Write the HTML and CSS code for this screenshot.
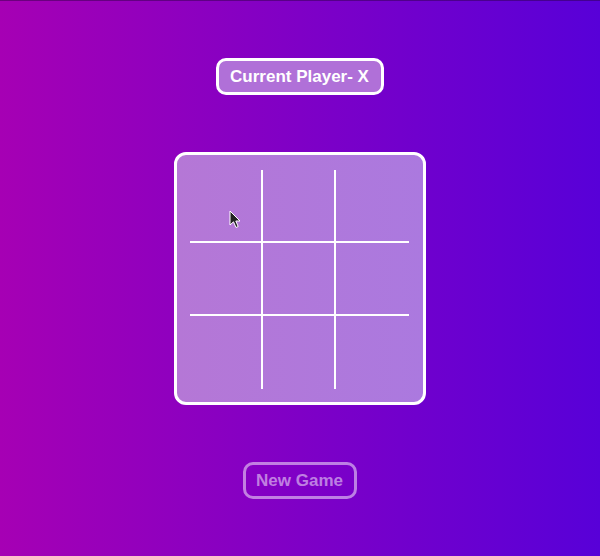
FILE: index.html
```html
<!DOCTYPE html>
<html lang="en">
<head>
<meta charset="utf-8">
<title>Tic Tac Toe</title>
<link rel="stylesheet" href="styles.css">
</head>
<body>
<main class="app">
  <div class="status">Current Player- X</div>
  <div class="board">
    <div class="grid">
      <div class="cell c-r c-b"></div>
      <div class="cell c-r c-b"></div>
      <div class="cell c-b"></div>
      <div class="cell c-r c-b"></div>
      <div class="cell c-r c-b"></div>
      <div class="cell c-b"></div>
      <div class="cell c-r"></div>
      <div class="cell c-r"></div>
      <div class="cell"></div>
    </div>
    <svg class="cursor" width="12" height="19" viewBox="0 0 12 19" aria-hidden="true">
      <path d="M1 1 L1 15 L4.5 11.8 L7 17.5 L9.2 16.5 L6.8 11 L11 11 Z" fill="#222" stroke="#fff" stroke-width="1"/>
    </svg>
  </div>
  <button class="new-game" type="button">New Game</button>
</main>
</body>
</html>
```
FILE: styles.css
```css
html, body {
  margin: 0;
  padding: 0;
}
body {
  height: 556px;
  box-sizing: border-box;
  border-top: 1px solid rgba(40, 0, 60, 0.45);
  background: linear-gradient(to right, #a600b4, #5800d8);
  font-family: "Liberation Sans", Arial, sans-serif;
  overflow: hidden;
}
.app {
  height: 555px;
  display: flex;
  flex-direction: column;
  align-items: center;
  justify-content: center;
  gap: 57px;
}
.status {
  box-sizing: border-box;
  width: 168px;
  height: 37px;
  display: flex;
  align-items: center;
  justify-content: center;
  border: 3px solid #fff;
  border-radius: 10px;
  background: #b070d8;
  color: #fff;
  font-weight: bold;
  font-size: 17px;
  margin-left: -1px;
}
.board {
  position: relative;
  box-sizing: border-box;
  width: 252px;
  height: 253px;
  border: 3px solid #fff;
  border-radius: 12px;
  background: linear-gradient(to right, #b577d6, #ab79df);
  padding: 15px 14px 15px 13px;
}
.grid {
  display: grid;
  grid-template-columns: 73px 73px 73px;
  grid-template-rows: 73px 73px 73px;
}
.cell {
  box-sizing: border-box;
}
.c-r {
  border-right: 2px solid #fff;
}
.c-b {
  border-bottom: 2px solid #fff;
}
.cursor {
  position: absolute;
  left: 52px;
  top: 55px;
}
.new-game {
  box-sizing: border-box;
  width: 114px;
  height: 37px;
  padding: 0;
  border: 3px solid rgba(255, 255, 255, 0.5);
  border-radius: 10px;
  background: transparent;
  color: rgba(255, 255, 255, 0.5);
  font-family: "Liberation Sans", Arial, sans-serif;
  font-weight: bold;
  font-size: 17px;
  margin-left: -1px;
}
```
